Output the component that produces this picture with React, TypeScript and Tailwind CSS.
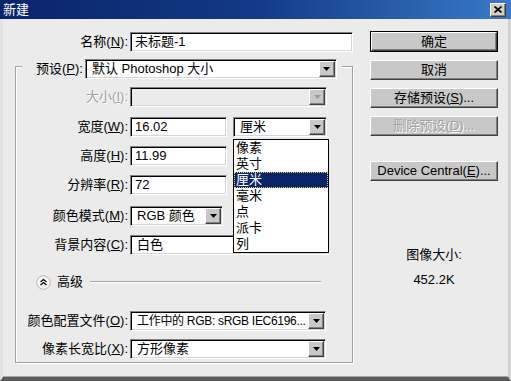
import React from 'react';

const sunken =
  'border border-t-[#808080] border-l-[#808080] border-b-white border-r-white shadow-[inset_1px_1px_0_#000,inset_-1px_-1px_0_#d6d6d6]';
const raised =
  'bg-[#c8c8c8] border border-t-white border-l-white border-b-[#404040] border-r-[#404040] shadow-[inset_-1px_-1px_0_#808080]';

const Arrow: React.FC<{ disabled?: boolean }> = ({ disabled }) => (
  <div className={`w-[16px] h-[16px] shrink-0 flex items-center justify-center ${raised}`}>
    <svg width="7" height="4" viewBox="0 0 7 4">
      <polygon points="0,0 7,0 3.5,4" fill={disabled ? '#9a9a9a' : '#000'} />
    </svg>
  </div>
);

const Label: React.FC<{ text: string; k: string; w?: string; disabled?: boolean }> = ({ text, k, w = 'w-[112px]', disabled }) => (
  <div
    className={`${w} shrink-0 text-right whitespace-nowrap ${
      disabled ? 'text-[#a0a0a0] [text-shadow:1px_1px_0_#fff]' : 'text-black'
    }`}
  >
    {text}(<u>{k}</u>):
  </div>
);

const Input: React.FC<{ value: string; w: string }> = ({ value, w }) => (
  <div className={`${w} h-[20px] bg-white pl-[4px] flex items-center ${sunken}`}>{value}</div>
);

const Select: React.FC<{ value?: string; w: string; disabled?: boolean; small?: boolean }> = ({ value, w, disabled, small }) => (
  <div
    className={`${w} h-[20px] ${disabled ? 'bg-[#ebebeb]' : 'bg-white'} pl-[6px] pr-[1px] flex items-center justify-between ${sunken}`}
  >
    <span className={`whitespace-nowrap ${small ? 'text-[12px] tracking-[-0.3px]' : ''}`}>{value}</span>
    <Arrow disabled={disabled} />
  </div>
);

const Button: React.FC<{ children: React.ReactNode; disabled?: boolean; def?: boolean; className?: string }> = ({
  children,
  disabled,
  def,
  className = '',
}) => (
  <div className={`${def ? 'border border-black' : ''} ${className}`}>
    <div
      className={`${def ? 'h-[19px]' : 'h-[20px]'} w-full flex items-center justify-center whitespace-nowrap ${raised} ${
        disabled ? 'text-[#a0a0a0] [text-shadow:1px_1px_0_#fff]' : 'text-black'
      }`}
    >
      {children}
    </div>
  </div>
);

const units = ['像素', '英寸', '厘米', '毫米', '点', '派卡', '列'];

export default function App() {
  return (
    <div className="w-[511px] h-[381px] flex flex-col bg-[#ebebeb] font-['Liberation_Sans','Noto_Sans_CJK_SC',sans-serif] text-[13px] leading-[16px] overflow-hidden">
      {/* title bar */}
      <div className="h-[19px] shrink-0 flex items-center justify-between pl-[3px] pr-[5px] bg-gradient-to-r from-[#0a246a] via-[#123a86] to-[#3a7ac6]">
        <span className="text-white text-[13px]">新建</span>
        <div className={`w-[16px] h-[14px] flex items-center justify-center ${raised} bg-[#d4d0c8]`}>
          <svg width="8" height="7" viewBox="0 0 8 7">
            <path d="M0.5 0.5 L7.5 6.5 M7.5 0.5 L0.5 6.5" stroke="#000" strokeWidth="1.8" />
          </svg>
        </div>
      </div>

      {/* body */}
      <div className="flex-1 flex pl-[12px] border-l-[3px] border-l-[#e2e2e2] border-r-[3px] border-r-[#d2d2d2] border-b-[4px] border-b-[#5c5c5c] shadow-[inset_0_-1px_0_#a8a8a8]">
        {/* left column */}
        <div className="w-[338px] shrink-0 flex flex-col">
          <div className="mt-[13px] flex items-center gap-[2px]">
            <Label text="名称" k="N" w="w-[113px]" />
            <Input value="未标题-1" w="w-[224px]" />
          </div>

          <div className="mt-[14px] border border-[#a3a3a3] shadow-[1px_1px_0_#fff,inset_1px_1px_0_#fff] flex flex-col pb-[3px]">
            <div className="-mt-[8px] ml-[6px] w-[320px] bg-[#ebebeb] pl-[14px] flex items-center gap-[2px]">
              <Label text="预设" k="P" w="w-auto" />
              <Select value="默认 Photoshop 大小" w="w-[252px]" />
            </div>

            <div className="mt-[8px] flex items-center gap-[2px]">
              <Label text="大小" k="I" disabled />
              <Select w="w-[197px]" disabled />
            </div>

            <div className="mt-[10px] flex items-center gap-[2px]">
              <Label text="宽度" k="W" />
              <Input value="16.02" w="w-[97px]" />
              <div className="relative ml-[4px]">
                <Select value="厘米" w="w-[94px]" />
                <div className="absolute z-10 left-0 top-[22px] w-[96px] bg-white border border-black flex flex-col">
                  {units.map((u) => (
                    <div
                      key={u}
                      className={`h-[16px] pl-[2px] flex items-center ${
                        u === '厘米'
                          ? 'bg-[#0a246a] text-white outline outline-1 outline-dotted outline-[#f0d060] -outline-offset-1'
                          : 'text-black'
                      }`}
                    >
                      {u}
                    </div>
                  ))}
                </div>
              </div>
            </div>

            <div className="mt-[9px] flex items-center gap-[2px]">
              <Label text="高度" k="H" />
              <Input value="11.99" w="w-[97px]" />
            </div>

            <div className="mt-[9px] flex items-center gap-[2px]">
              <Label text="分辨率" k="R" />
              <Input value="72" w="w-[97px]" />
            </div>

            <div className="mt-[11px] flex items-center gap-[2px]">
              <Label text="颜色模式" k="M" />
              <Select value="RGB 颜色" w="w-[93px]" />
            </div>

            <div className="mt-[9px] flex items-center gap-[2px]">
              <Label text="背景内容" k="C" />
              <Select value="白色" w="w-[198px]" />
            </div>

            <div className="mt-[17px] h-[20px] flex items-center pl-[20px]">
              <svg width="15" height="15" viewBox="0 0 15 15">
                <circle cx="7.5" cy="7.5" r="6.8" fill="#f6f6f6" stroke="#b4b4b4" />
                <path d="M4.5 7 L7.5 4.5 L10.5 7 M4.5 10 L7.5 7.5 L10.5 10" fill="none" stroke="#000" strokeWidth="1.2" />
              </svg>
              <span className="ml-[6px]">高级</span>
              <div className="ml-[7px] w-[231px] h-[2px] border-t border-t-[#a3a3a3] border-b border-b-white" />
            </div>

            <div className="mt-[19px] flex items-center gap-[2px]">
              <Label text="颜色配置文件" k="O" />
              <Select value="工作中的 RGB: sRGB IEC6196..." w="w-[196px]" small />
            </div>

            <div className="mt-[8px] flex items-center gap-[2px]">
              <Label text="像素长宽比" k="X" />
              <Select value="方形像素" w="w-[196px]" />
            </div>
          </div>
        </div>

        {/* right column */}
        <div className="ml-[17px] w-[128px] shrink-0 flex flex-col items-center">
          <Button def className="mt-[12px] w-full">
            确定
          </Button>
          <Button className="mt-[8px] w-full">取消</Button>
          <Button className="mt-[8px] w-full">
            存储预设(<u>S</u>)...
          </Button>
          <Button disabled className="mt-[8px] w-full">
            删除预设(<u>D</u>)...
          </Button>
          <Button className="mt-[25px] w-full">
            Device Central(<u>E</u>)...
          </Button>
          <div className="mt-[66px]">图像大小:</div>
          <div className="mt-[9px]">452.2K</div>
        </div>
      </div>
    </div>
  );
}
